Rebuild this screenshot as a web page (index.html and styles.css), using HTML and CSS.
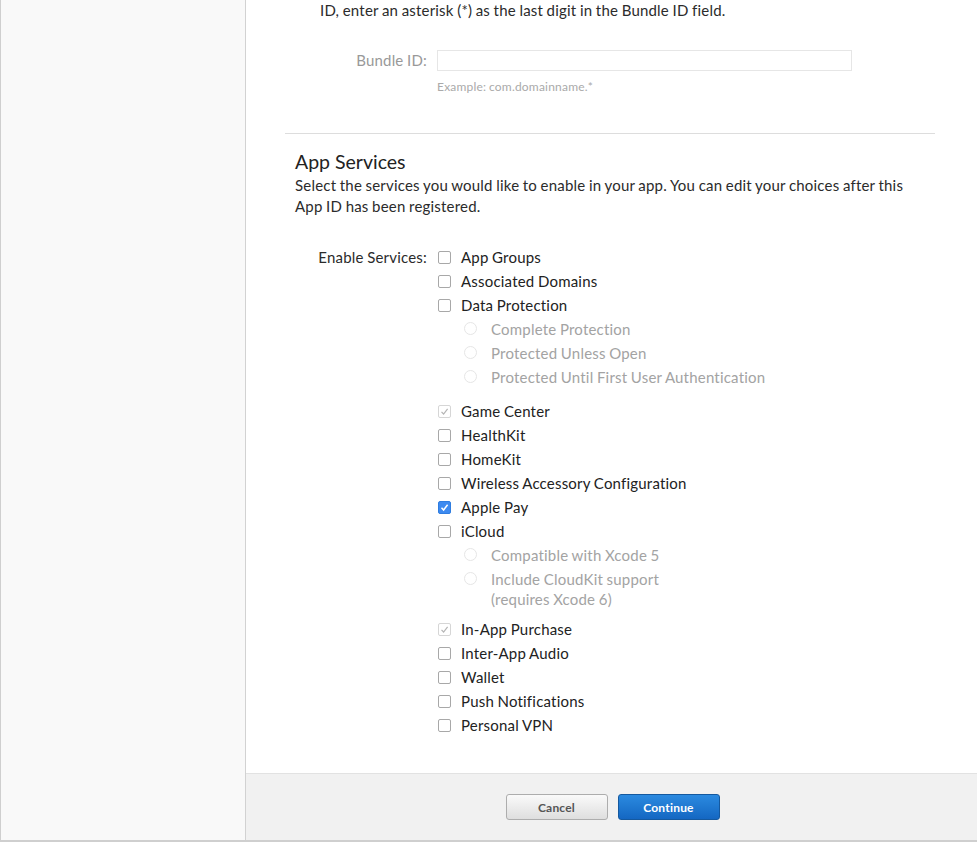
FILE: index.html
```html
<!DOCTYPE html>
<html>
<head>
<meta charset="utf-8">
<link rel="stylesheet" href="styles.css">
</head>
<body>
<div class="frame">
  <aside class="sidebar"></aside>
  <main class="main">
    <div class="content">
      <p class="intro">ID, enter an asterisk (*) as the last digit in the Bundle ID field.</p>
      <div class="form-row bundle-row">
        <div class="label muted">Bundle ID:</div>
        <div class="control">
          <div class="input"></div>
          <div class="hint">Example: com.domainname.*</div>
        </div>
      </div>
      <hr class="divider">
      <section class="services">
        <h2 class="title">App Services</h2>
        <p class="desc">Select the services you would like to enable in your app. You can edit your choices after this App ID has been registered.</p>
        <div class="form-row services-row">
          <div class="label">Enable Services:</div>
          <div class="control list">
            <div class="item"><span class="cb"></span><span>App Groups</span></div>
            <div class="item"><span class="cb"></span><span>Associated Domains</span></div>
            <div class="item"><span class="cb"></span><span>Data Protection</span></div>
            <div class="sub">
              <div class="item radio"><span class="rd"></span><span>Complete Protection</span></div>
              <div class="item radio"><span class="rd"></span><span>Protected Unless Open</span></div>
              <div class="item radio"><span class="rd"></span><span>Protected Until First User Authentication</span></div>
            </div>
            <div class="item"><span class="cb disabled-check"><svg viewBox="0 0 13 13" width="13" height="13"><path d="M3.5 6.8 L5.6 9 L9.6 3.8" fill="none" stroke="#b5b5b5" stroke-width="1.2"/></svg></span><span>Game Center</span></div>
            <div class="item"><span class="cb"></span><span>HealthKit</span></div>
            <div class="item"><span class="cb"></span><span>HomeKit</span></div>
            <div class="item"><span class="cb"></span><span>Wireless Accessory Configuration</span></div>
            <div class="item"><span class="cb checked"><svg viewBox="0 0 13 13" width="13" height="13"><path d="M3.5 6.8 L5.6 9 L9.6 3.8" fill="none" stroke="#fff" stroke-width="1.5"/></svg></span><span>Apple Pay</span></div>
            <div class="item"><span class="cb"></span><span>iCloud</span></div>
            <div class="sub tight">
              <div class="item radio"><span class="rd"></span><span>Compatible with Xcode 5</span></div>
              <div class="item radio"><span class="rd"></span><span>Include CloudKit support<br>(requires Xcode 6)</span></div>
            </div>
            <div class="item"><span class="cb disabled-check"><svg viewBox="0 0 13 13" width="13" height="13"><path d="M3.5 6.8 L5.6 9 L9.6 3.8" fill="none" stroke="#b5b5b5" stroke-width="1.2"/></svg></span><span>In-App Purchase</span></div>
            <div class="item"><span class="cb"></span><span>Inter-App Audio</span></div>
            <div class="item"><span class="cb"></span><span>Wallet</span></div>
            <div class="item"><span class="cb"></span><span>Push Notifications</span></div>
            <div class="item"><span class="cb"></span><span>Personal VPN</span></div>
          </div>
        </div>
      </section>
    </div>
    <footer class="footer">
      <button class="btn cancel">Cancel</button>
      <button class="btn continue">Continue</button>
    </footer>
  </main>
</div>
</body>
</html>
```

FILE: styles.css
```css
html, body {
  margin: 0;
  padding: 0;
  background: #fff;
}
body {
  font-family: "Lato", "Open Sans", sans-serif;
  font-size: 15px;
  letter-spacing: 0.2px;
  word-spacing: -0.5px;
  color: #2b2b2b;
}
.frame {
  display: flex;
  height: 842px;
  border-left: 1px solid #cfcfcf;
  border-bottom: 2px solid #cfcfcf;
  box-sizing: border-box;
}
.sidebar {
  width: 244px;
  flex: none;
  background: #f9f9f9;
  border-right: 1px solid #d2d2d2;
}
.main {
  flex: 1;
  display: flex;
  flex-direction: column;
}
.content {
  flex: 1;
  padding-left: 49px;
}
.intro {
  margin: 0 0 0 25px;
  line-height: 21px;
}
.form-row {
  display: flex;
}
.label {
  width: 142px;
  text-align: right;
  padding-right: 10px;
  flex: none;
  box-sizing: border-box;
}
.muted {
  color: #999;
}
.bundle-row {
  margin-top: 29px;
}
.bundle-row .label {
  line-height: 20px;
}
.input {
  width: 415px;
  height: 21px;
  border: 1px solid #e6e6e6;
  box-sizing: border-box;
}
.hint {
  font-size: 12px;
  color: #aaa;
  margin-top: 9px;
  line-height: 14px;
}
.divider {
  border: 0;
  border-top: 1px solid #ddd;
  margin: 39px 42px 0 -10px;
}
.title {
  font-weight: normal;
  font-size: 19.5px;
  letter-spacing: 0;
  word-spacing: 0;
  margin: 15px 0 0 0;
  line-height: 26px;
  color: #222;
}
.desc {
  margin: 0;
  line-height: 21px;
  width: 625px;
}
.services-row {
  margin-top: 28px;
}
.services-row .label {
  line-height: 24px;
}
.list {
  display: flex;
  flex-direction: column;
}
.item {
  display: flex;
  align-items: flex-start;
  line-height: 24px;
  color: #222;
}
.cb {
  width: 13px;
  height: 13px;
  border: 1px solid #a8a8a8;
  border-radius: 2px;
  box-sizing: border-box;
  margin: 6px 10px 0 1px;
  background: #fff;
  flex: none;
  display: flex;
}
.cb svg { margin: -1px; }
.cb.disabled-check {
  border-color: #d6d6d6;
}
.cb.checked {
  background: #3d8af0;
  border-color: #2f7de0;
}
.sub {
  padding-left: 25px;
  margin-bottom: 10px;
}
.sub.tight {
  margin-bottom: 8px;
}
.item.radio {
  color: #a3a3a3;
  min-height: 24px;
}
.item.radio span:last-child {
  line-height: 20px;
  padding-top: 2px;
}
.rd {
  width: 13px;
  height: 13px;
  border: 1px solid #e6e6e6;
  border-radius: 50%;
  box-sizing: border-box;
  margin: 5px 14px 0 2px;
  flex: none;
}
.footer {
  height: 67px;
  flex: none;
  background: #f1f1f1;
  border-top: 1px solid #e2e2e2;
  display: flex;
  justify-content: center;
  align-items: flex-start;
  gap: 10px;
  padding-top: 20px;
  padding-left: 2px;
  box-sizing: border-box;
}
.btn {
  width: 102px;
  height: 26px;
  border-radius: 3px;
  font-family: "Lato", "Open Sans", sans-serif;
  font-weight: bold;
  font-size: 12px;
  letter-spacing: 0.2px;
  cursor: pointer;
}
.cancel {
  background: linear-gradient(#fafafa, #dedede);
  border: 1px solid #adadad;
  color: #555;
}
.continue {
  background: linear-gradient(#2b8ae0, #1467c2);
  border: 1px solid #15599f;
  color: #fff;
}
```
